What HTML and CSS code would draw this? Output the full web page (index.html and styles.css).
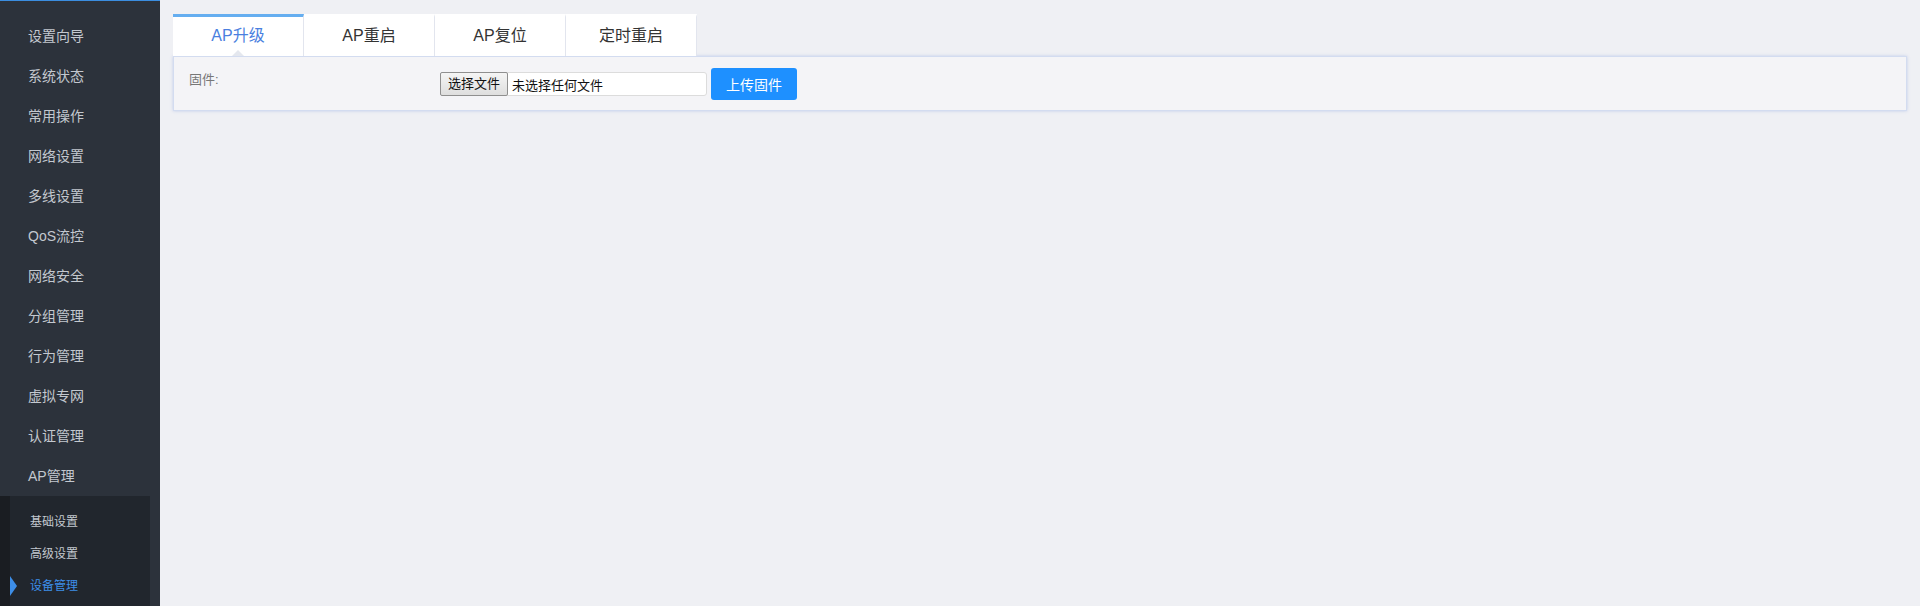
FILE: index.html
```html
<!DOCTYPE html>
<html lang="zh-CN">
<head>
    <meta charset="UTF-8">
    <meta name="viewport" content="width=device-width, initial-scale=1.0">
    <title>AP管理 - 设备管理</title>
    <link rel="stylesheet" href="styles.css">
</head>
<body>

<aside class="sidebar">
    <ul class="menu">
        <li class="menu-item">设置向导</li>
        <li class="menu-item">系统状态</li>
        <li class="menu-item">常用操作</li>
        <li class="menu-item">网络设置</li>
        <li class="menu-item">多线设置</li>
        <li class="menu-item">QoS流控</li>
        <li class="menu-item">网络安全</li>
        <li class="menu-item">分组管理</li>
        <li class="menu-item">行为管理</li>
        <li class="menu-item">虚拟专网</li>
        <li class="menu-item">认证管理</li>
        <li class="menu-item">AP管理</li>
    </ul>
    <ul class="submenu">
        <li class="submenu-item">基础设置</li>
        <li class="submenu-item">高级设置</li>
        <li class="submenu-item active">设备管理</li>
    </ul>
</aside>

<main class="content">
    <div class="tabs">
        <div class="tab active">AP升级</div>
        <div class="tab">AP重启</div>
        <div class="tab">AP复位</div>
        <div class="tab">定时重启</div>
    </div>

    <div class="panel">
        <div class="form-row">
            <label class="form-label">固件:</label>
            <div class="file-input">
                <span class="file-btn">选择文件</span>
                <span class="file-name">未选择任何文件</span>
            </div>
            <button class="upload-btn">上传固件</button>
        </div>
    </div>
</main>

</body>
</html>
```

FILE: styles.css
```css
* {
    box-sizing: border-box;
}

body {
    margin: 0;
    display: flex;
    height: 100vh;
    font-family: "Liberation Sans", "Noto Sans CJK SC", sans-serif;
    background-color: #eff0f4;
}

.sidebar {
    width: 160px;
    flex-shrink: 0;
    display: flex;
    flex-direction: column;
    background-color: #2c323b;
    border-top: 1px solid #3b8de0;
}

.menu,
.submenu {
    list-style: none;
    margin: 0;
    padding: 0;
}

.menu {
    padding-top: 15px;
}

.menu-item {
    height: 40px;
    line-height: 40px;
    padding-left: 28px;
    font-size: 14px;
    color: #c3c8cf;
}

.submenu {
    flex: 1;
    margin-right: 10px;
    padding-top: 10px;
    background-color: #21262d;
    border-left: 10px solid #1a1d22;
}

.submenu-item {
    position: relative;
    height: 32px;
    line-height: 32px;
    padding-left: 20px;
    font-size: 12px;
    color: #c3c8cf;
}

.submenu-item.active {
    color: #3d8ee8;
}

.submenu-item.active::before {
    content: "";
    position: absolute;
    left: 0;
    top: 6px;
    border-top: 10px solid transparent;
    border-bottom: 10px solid transparent;
    border-left: 7px solid #3d8ee8;
}

.content {
    flex: 1;
    padding: 14px 13px 0 13px;
}

.tabs {
    display: flex;
}

.tab {
    width: 131px;
    height: 42px;
    line-height: 38px;
    text-align: center;
    font-size: 16px;
    color: #333;
    background-color: #fff;
    border-top: 3px solid #fff;
    border-right: 1px solid #e2e5ee;
    position: relative;
}

.tab.active {
    color: #4a7fe0;
    border-top-color: #65aef0;
}

.tab.active::after {
    content: "";
    position: absolute;
    left: 59px;
    bottom: 0;
    border-left: 6px solid transparent;
    border-right: 6px solid transparent;
    border-bottom: 6px solid #e4e7ee;
}

.panel {
    background-color: #f4f4f7;
    border: 1px solid #d3dcf0;
    box-shadow: 0 0 3px rgba(140, 165, 225, 0.45);
    padding: 11px 15px 10px 15px;
}

.form-row {
    display: flex;
    align-items: flex-start;
}

.form-label {
    width: 251px;
    margin-top: 2px;
    line-height: 20px;
    font-size: 13px;
    color: #777;
}

.file-input {
    display: flex;
    align-items: center;
    width: 267px;
    height: 24px;
    margin-top: 4px;
    background-color: #fff;
    border: 1px solid #dcdcdc;
    border-radius: 3px;
    font-size: 13px;
    color: #111;
}

.file-btn {
    height: 24px;
    margin: -1px 0 0 -1px;
    padding: 0 7px;
    line-height: 22px;
    border: 1px solid #8f8f8f;
    border-radius: 2px;
    background: linear-gradient(#f5f5f5, #dedede);
    color: #111;
}

.file-name {
    padding-left: 4px;
}

.upload-btn {
    width: 86px;
    height: 32px;
    margin-left: 4px;
    border: none;
    border-radius: 3px;
    background-color: #1e90ff;
    color: #fff;
    font-family: inherit;
    font-size: 14px;
    cursor: pointer;
}
```
